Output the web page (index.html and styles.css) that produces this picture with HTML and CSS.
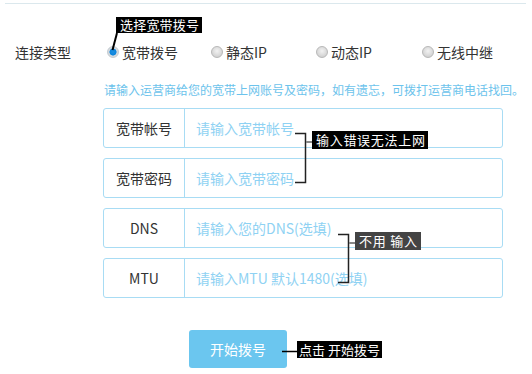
FILE: index.html
```html
<!DOCTYPE html>
<html>
<head>
<meta charset="utf-8">
<link rel="stylesheet" href="styles.css">
</head>
<body>
<div class="page">
  <div class="topline"></div>
  <div class="type-row">
    <span class="type-label">连接类型</span>
    <div class="options">
      <label class="opt"><span class="radio checked"></span>宽带拨号</label>
      <label class="opt"><span class="radio"></span>静态IP</label>
      <label class="opt"><span class="radio"></span>动态IP</label>
      <label class="opt"><span class="radio"></span>无线中继</label>
    </div>
  </div>
  <p class="hint">请输入运营商给您的宽带上网账号及密码，如有遗忘，可拨打运营商电话找回。</p>
  <div class="fields">
    <div class="field"><span class="field-label">宽带帐号</span><span class="ph">请输入宽带帐号</span></div>
    <div class="field"><span class="field-label">宽带密码</span><span class="ph">请输入宽带密码</span></div>
    <div class="field"><span class="field-label">DNS</span><span class="ph">请输入您的DNS(选填)</span></div>
    <div class="field"><span class="field-label">MTU</span><span class="ph">请输入MTU 默认1480(选填)</span></div>
  </div>
  <button class="btn">开始拨号</button>

  <svg class="marks" width="532" height="374" viewBox="0 0 532 374">
    <line x1="117" y1="30" x2="112.5" y2="47" stroke="#000" stroke-width="2"/>
    <polyline points="295,130.5 305.5,130.5 305.5,179.5 295,179.5" fill="none" stroke="#222" stroke-width="1.5"/>
    <line x1="306" y1="139" x2="312" y2="139" stroke="#888" stroke-width="2"/>
    <polyline points="338,231.5 348.5,231.5 348.5,279.5 338,279.5" fill="none" stroke="#222" stroke-width="1.5"/>
    <line x1="349" y1="240" x2="355" y2="240" stroke="#888" stroke-width="2"/>
    <line x1="282" y1="348.5" x2="297" y2="348.5" stroke="#000" stroke-width="1.5"/>
  </svg>
  <div class="note note-type">选择宽带拨号</div>
  <div class="note note-err">输入错误无法上网</div>
  <div class="note note-opt">不用 输入</div>
  <div class="note note-btn">点击 开始拨号</div>
</div>
</body>
</html>
```
FILE: styles.css
```css
* { box-sizing: border-box; }
html, body { margin: 0; padding: 0; background: #fff; }
body {
  font-family: "Noto Sans CJK SC", "Microsoft YaHei", sans-serif;
  color: #333;
  width: 532px;
  height: 374px;
  overflow: hidden;
}
.page { position: relative; width: 532px; height: 374px; }
.topline {
  margin: 3px 6px 0 5px;
  border-top: 1px solid #dbe8ed;
}
.type-row {
  display: flex;
  align-items: center;
  margin-top: 38px;
  height: 20px;
  padding-left: 15px;
  font-size: 14px;
  line-height: 20px;
}
.type-label { width: 92px; }
.options { display: grid; grid-template-columns: 104px 105px 106px 100px; }
.opt { display: flex; align-items: center; gap: 3px; white-space: nowrap; }
.radio {
  width: 12px;
  height: 12px;
  border-radius: 50%;
  border: 1px solid #b8b8b8;
  background: radial-gradient(circle at 50% 40%, #f2f2f2 0%, #d4d4d4 70%, #c4c4c4 100%);
  flex: none;
  position: relative;
}
.radio.checked {
  border-color: #c4ccd2;
  background: radial-gradient(circle, #1c8fe2 0%, #0d85dc 45%, #d9dde0 55%, #c8cdd1 100%);
}
.hint {
  margin: 20px 0 0;
  padding-left: 104px;
  font-size: 12px;
  line-height: 16px;
  color: #6cc3ec;
  white-space: nowrap;
}
.fields {
  margin: 10px 0 0 103px;
  width: 400px;
  display: flex;
  flex-direction: column;
  gap: 10px;
}
.field {
  height: 40px;
  border: 1px solid #a8dcf4;
  border-radius: 3px;
  display: flex;
  align-items: center;
  font-size: 14px;
}
.field-label {
  width: 81px;
  height: 100%;
  border-right: 1px solid #a8dcf4;
  display: flex;
  align-items: center;
  justify-content: center;
  color: #333;
}
.ph { padding-left: 11px; color: #8fd2f3; white-space: nowrap; }
.btn {
  display: block;
  margin: 32px 0 0 189px;
  width: 98px;
  height: 38px;
  border: none;
  border-radius: 3px;
  background: #6bc6ef;
  color: #fff;
  font-family: "Noto Sans CJK SC", sans-serif;
  font-size: 14px;
  padding: 0;
}
.marks { position: absolute; left: 0; top: 0; pointer-events: none; }
.note {
  position: absolute;
  background: #000;
  color: #fff;
  font-size: 13px;
  white-space: nowrap;
  padding-left: 4px;
}
.note-type { left: 116px; top: 14px; width: 86px; height: 16px; line-height: 16px; letter-spacing: 0.2px; }
.note-err { left: 312px; top: 128px; width: 116px; height: 18px; line-height: 18px; letter-spacing: 0.7px; }
.note-opt { left: 355px; top: 229px; width: 66px; height: 18px; line-height: 18px; letter-spacing: 0.8px; background: #444; }
.note-btn { left: 297px; top: 338px; width: 85px; height: 17px; line-height: 17px; letter-spacing: 0; padding-left: 2px; }
```
